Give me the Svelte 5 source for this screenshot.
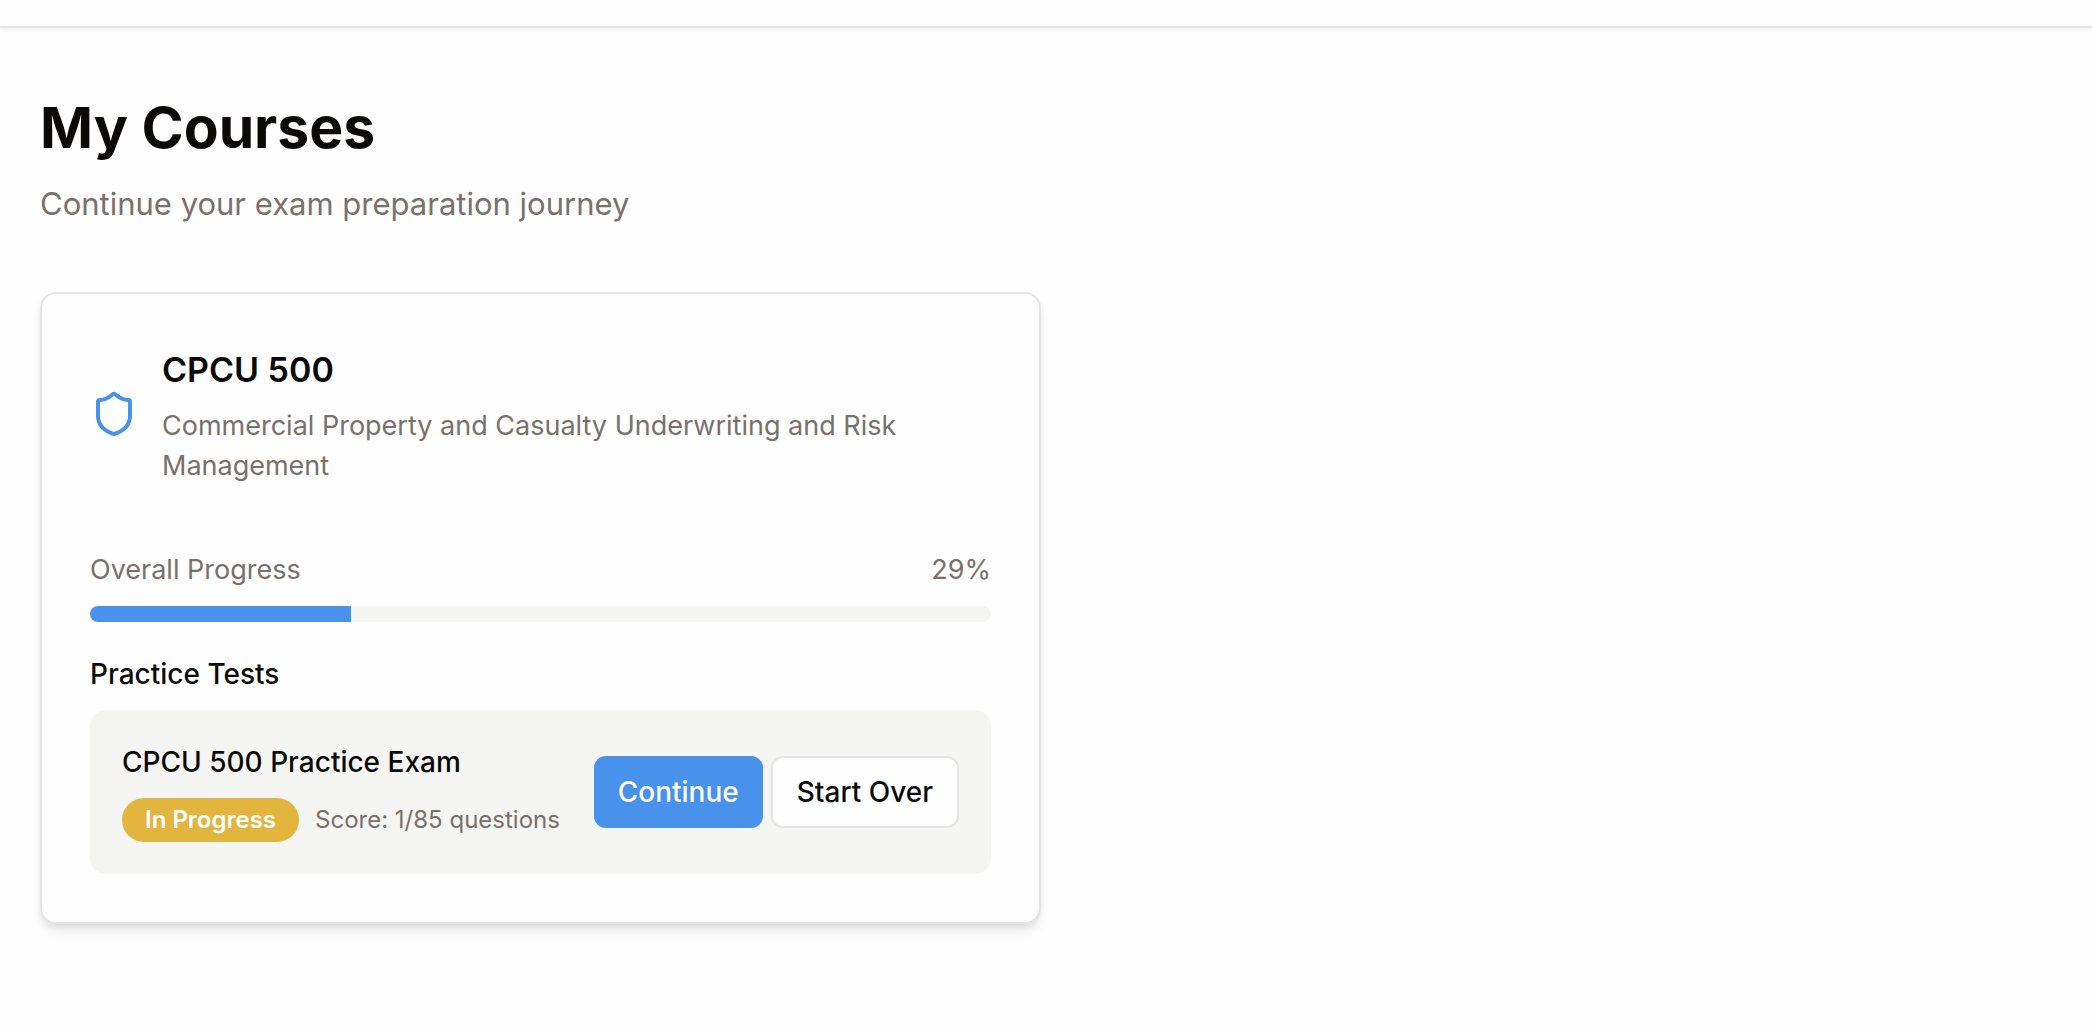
<script lang="ts">
  const course = {
    title: 'CPCU 500',
    description: 'Commercial Property and Casualty Underwriting and Risk Management',
    progress: 29,
    tests: [{ name: 'CPCU 500 Practice Exam', status: 'In Progress', score: 'Score: 1/85 questions' }]
  };
</script>

<header class="topbar"></header>

<main class="page">
  <div class="intro">
    <h1>My Courses</h1>
    <p>Continue your exam preparation journey</p>
  </div>

  <div class="courses">
    <article class="card">
      <div class="card-head">
        <svg class="shield" viewBox="0 0 24 24" aria-hidden="true">
          <path d="M20 13c0 5-3.5 7.5-7.66 8.95a1 1 0 0 1-.67-.01C7.5 20.5 4 18 4 13V6a1 1 0 0 1 1-1c2 0 4.5-1.2 6.24-2.72a1.17 1.17 0 0 1 1.52 0C14.51 3.81 17 5 19 5a1 1 0 0 1 1 1z" />
        </svg>
        <div class="card-text">
          <h2>{course.title}</h2>
          <p>{course.description}</p>
        </div>
      </div>

      <div class="progress-label">
        <span id="progress-name">Overall Progress</span>
        <span>{course.progress}%</span>
      </div>
      <div class="track" role="progressbar" aria-labelledby="progress-name" aria-valuemin="0" aria-valuemax="100" aria-valuenow={course.progress}>
        <div class="fill" style="width: {course.progress}%"></div>
      </div>

      <h3>Practice Tests</h3>
      {#each course.tests as test}
        <div class="test">
          <div class="test-info">
            <h4>{test.name}</h4>
            <div class="meta">
              <span class="badge">{test.status}</span>
              <span class="score">{test.score}</span>
            </div>
          </div>
          <div class="actions">
            <button type="button" class="primary">Continue</button>
            <button type="button" class="outline">Start Over</button>
          </div>
        </div>
      {/each}
    </article>
  </div>
</main>

<style>
  :global(body) {
    margin: 0;
    background: #fefefe;
    color: #0c0a09;
    font-family: Inter, 'Liberation Sans', sans-serif;
    font-size: 28px;
    line-height: 40px;
  }

  h1, h2, h3, h4, p {
    margin: 0;
  }

  .topbar {
    height: 26px;
    background: #fefefe;
    border-bottom: 2px solid #e5e5e5;
    box-shadow: 0 2px 4px rgba(0, 0, 0, 0.05);
  }

  .page {
    padding: 64px 40px;
  }

  .intro {
    margin-bottom: 64px;
  }

  h1 {
    margin-bottom: 16px;
    font-size: 57px;
    line-height: 72px;
    font-weight: 700;
  }

  .intro p {
    color: #78716c;
    font-size: 31px;
    line-height: 48px;
  }

  .courses {
    display: grid;
    grid-template-columns: 1fr 1fr;
    gap: 10px;
  }

  .card {
    padding: 48px;
    background: #fefefe;
    border: 2px solid #e5e5e5;
    border-radius: 16px;
    box-shadow: 0 8px 12px -2px rgba(0, 0, 0, 0.1), 0 4px 8px -4px rgba(0, 0, 0, 0.1);
  }

  .card-head {
    display: flex;
    align-items: center;
    gap: 24px;
    margin-bottom: 64px;
  }

  .shield {
    flex: none;
    width: 48px;
    height: 48px;
    fill: none;
    stroke: #4892eb;
    stroke-width: 2;
    stroke-linecap: round;
    stroke-linejoin: round;
  }

  h2 {
    margin-bottom: 8px;
    font-size: 34px;
    line-height: 56px;
    font-weight: 600;
  }

  .card-text p,
  .progress-label {
    color: #78716c;
    font-size: 27px;
  }

  .card-text p {
    padding-right: 48px;
  }

  .progress-label {
    display: flex;
    justify-content: space-between;
    margin-bottom: 16px;
  }

  .track {
    height: 16px;
    margin-bottom: 32px;
    overflow: hidden;
    background: #f5f5f3;
    border-radius: 8px;
  }

  .fill {
    height: 100%;
    background: #4892eb;
  }

  h3, h4 {
    margin-bottom: 16px;
    font-size: 28px;
    font-weight: 500;
  }

  .test {
    display: flex;
    align-items: center;
    justify-content: space-between;
    padding: 32px;
    background: #f5f5f3;
    border-radius: 16px;
  }

  .meta {
    display: flex;
    align-items: center;
    gap: 16px;
    font-size: 24px;
    line-height: 32px;
    white-space: nowrap;
  }

  .badge {
    padding: 6px 23px;
    background: #e2b53e;
    border-radius: 22px;
    color: #fefefe;
    font-weight: 600;
  }

  .score {
    color: #78716c;
  }

  .actions {
    display: flex;
    gap: 8px;
  }

  button {
    height: 72px;
    padding: 0 24px;
    border: 0;
    border-radius: 12px;
    font: inherit;
    font-weight: 500;
    white-space: nowrap;
    cursor: pointer;
  }

  .primary {
    background: #4892eb;
    color: #fefefe;
  }

  .outline {
    background: #fefefe;
    border: 2px solid #e5e5e5;
    color: #0c0a09;
  }
</style>
